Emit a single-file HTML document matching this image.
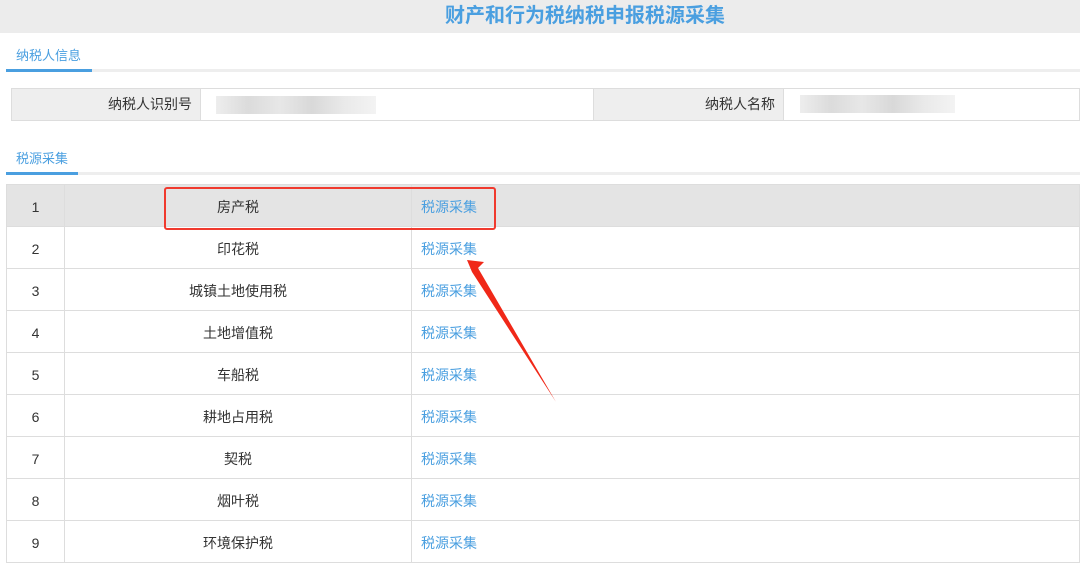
<!DOCTYPE html>
<html><head><meta charset="utf-8"><style>
*{margin:0;padding:0;box-sizing:border-box}
body{width:1080px;height:576px;background:#fff;font-family:"Liberation Sans","Noto Sans CJK SC",sans-serif;font-size:14px;color:#333;position:relative;overflow:hidden}
.hdr{position:absolute;left:0;top:0;width:1080px;height:33px;background:#ececec;text-align:center;line-height:33px;font-size:20px;font-weight:bold;color:#4a9fe0;padding-left:90px}
.tab{position:absolute;left:6px;font-size:13px;color:#4a9fe0}
.line{position:absolute;left:6px;width:1074px;height:3px;background:#eee}
.ul{position:absolute;left:6px;height:3px;background:#4a9fe0}
.info{position:absolute;left:11px;top:88px;width:1069px;height:33px;border:1px solid #ddd;display:flex}
.info div{height:31px;line-height:31px}
.lb{background:#eee;text-align:right;padding-right:8px;border-right:1px solid #ddd}
.blur{position:absolute;height:12px;background:linear-gradient(90deg,#e6e6e6,#ccc,#ddd,#c8c8c8,#e0e0e0,#eee)}
table{position:absolute;left:6px;top:184px;width:1074px;border-collapse:collapse}
td{height:42px;border:1px solid #ddd;text-align:center;padding-top:2px}
td.a{text-align:left;padding-left:9px;color:#4a9fe0}
tr.f td{background:#e4e4e4}
</style></head><body>
<div class="hdr">财产和行为税纳税申报税源采集</div>
<div class="tab" style="top:45px;left:16px">纳税人信息</div>
<div class="line" style="top:69px"></div>
<div class="ul" style="top:69px;width:86px"></div>
<div class="info">
<div class="lb" style="width:189px">纳税人识别号</div>
<div style="width:393px;border-right:1px solid #ddd"></div>
<div class="lb" style="width:190px">纳税人名称</div>
<div style="flex:1"></div>
</div>
<div class="blur" style="left:216px;top:96px;width:160px;height:18px;opacity:.7"></div>
<div class="blur" style="left:800px;top:95px;width:155px;height:18px;opacity:.7"></div>
<div class="tab" style="top:148px;left:16px">税源采集</div>
<div class="line" style="top:172px"></div>
<div class="ul" style="top:172px;width:72px"></div>
<table>
<colgroup><col style="width:58px"><col style="width:347px"><col></colgroup>
<tr class="f"><td>1</td><td>房产税</td><td class="a">税源采集</td></tr>
<tr><td>2</td><td>印花税</td><td class="a">税源采集</td></tr>
<tr><td>3</td><td>城镇土地使用税</td><td class="a">税源采集</td></tr>
<tr><td>4</td><td>土地增值税</td><td class="a">税源采集</td></tr>
<tr><td>5</td><td>车船税</td><td class="a">税源采集</td></tr>
<tr><td>6</td><td>耕地占用税</td><td class="a">税源采集</td></tr>
<tr><td>7</td><td>契税</td><td class="a">税源采集</td></tr>
<tr><td>8</td><td>烟叶税</td><td class="a">税源采集</td></tr>
<tr><td>9</td><td>环境保护税</td><td class="a">税源采集</td></tr>
</table>
<div style="position:absolute;left:164px;top:187px;width:332px;height:43px;border:2px solid #f03a2e;border-radius:3px"></div>
<svg style="position:absolute;left:0;top:0" width="1080" height="576"><polygon points="467,260 484,262 478,268 556,402 472,272" fill="#f02818"/></svg>
</body></html>
